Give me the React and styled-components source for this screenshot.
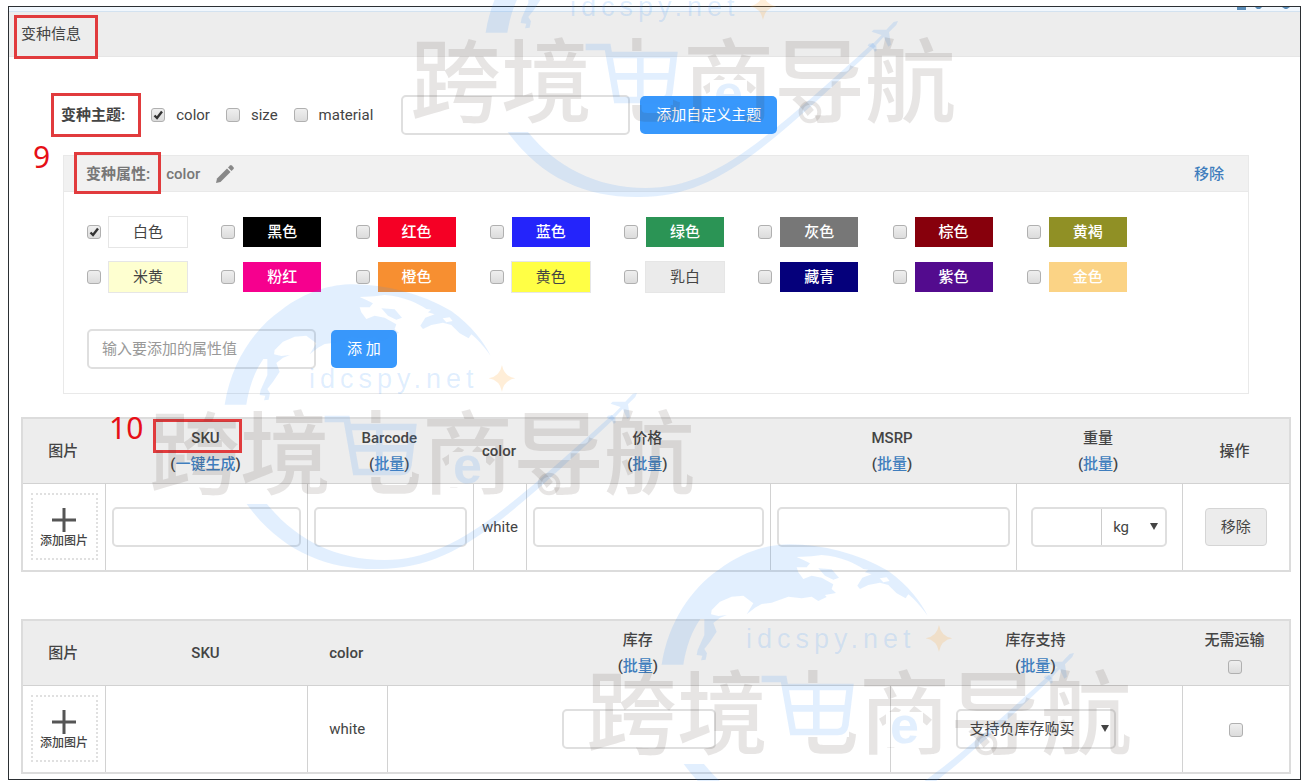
import React from 'react';
import styled, { createGlobalStyle } from 'styled-components';

const GlobalStyle = createGlobalStyle`
    * {
        box-sizing: border-box;
    }
    body {
        margin: 0;
        background: #fff;
        color: #444;
        font-family: Roboto, "Noto Sans CJK SC", sans-serif;
        font-size: 15px;
        line-height: 26px;
    }
    input, select, button {
        font: inherit;
        color: inherit;
    }
`;

const Page = styled.div`
    position: relative;
    padding: 6px 4px 3px 8px;
`;

const Frame = styled.main`
    border: 1px solid #2b2f33;
    padding-bottom: 5px;
`;

const TopStrip = styled.div`
    display: flex;
    justify-content: flex-end;
    height: 5px;
    padding-right: 8px;
    background: #f1f7fd;
    border-bottom: 1px solid #d3e2f0;
`;

const SectionHeader = styled.header`
    display: flex;
    height: 45px;
    padding: 9px 12px;
    background: #ededed;
    border-bottom: 1px solid #e6e6e6;
`;

const SectionTitle = styled.h1`
    position: relative;
    margin: 0;
    font-size: 15px;
    font-weight: 400;
    line-height: 26px;
`;

const Highlight = styled.span`
    position: absolute;
    inset: ${props => props.$inset};
    border: 3px solid #e13b3d;
    pointer-events: none;
`;

const StepNumber = styled.span`
    position: absolute;
    left: ${props => props.$left};
    top: ${props => props.$top};
    color: #e60f17;
    font-family: "Noto Sans", sans-serif;
    font-size: 30px;
    font-weight: 400;
    line-height: 30px;
`;

const ThemeRow = styled.div`
    display: flex;
    align-items: center;
    gap: 10px;
    padding: 38px 52px 0;
`;

const ThemeChoices = styled.div`
    display: flex;
    gap: 16px;
    margin: 0 18px 0 16px;
`;

const FieldLabel = styled.span`
    position: relative;
    font-weight: 700;
`;

const CheckLabel = styled.label`
    display: flex;
    align-items: center;
    gap: 11px;
`;

const CheckBox = styled.span`
    position: relative;
    display: inline-flex;
    width: 14px;
    height: 14px;
    vertical-align: middle;

    input {
        appearance: none;
        width: 14px;
        height: 14px;
        margin: 0;
        border: 1px solid #b0b0b0;
        border-radius: 3px;
        background: linear-gradient(#efefef, #dcdcdc);
    }
    svg {
        position: absolute;
        inset: 1px;
        display: none;
        pointer-events: none;
    }
    input:checked + svg {
        display: block;
    }
`;

const TextInput = styled.input`
    width: ${props => props.$width || '100%'};
    height: 40px;
    padding: 0 13px;
    border: 2px solid #dfdfdf;
    border-radius: 5px;
    background: #fff;

    &::placeholder {
        color: #999;
        opacity: 1;
    }
`;

const PrimaryButton = styled.button`
    height: 38px;
    padding: 0 16px;
    border: 0;
    border-radius: 5px;
    background: #3898fc;
    color: #fff;
`;

const PlainButton = styled.button`
    height: 38px;
    padding: 0 15px;
    border: 1px solid #d5d5d5;
    border-radius: 4px;
    background: #ececec;
`;

const Panel = styled.section`
    position: relative;
    margin: 20px 51px 23px 54px;
    border: 1px solid #e9e9e9;
`;

const PanelHeader = styled.div`
    display: flex;
    align-items: center;
    gap: 16px;
    height: 36px;
    padding: 0 24px 0 22px;
    background: #f1f1f1;
    border-bottom: 1px solid #e9e9e9;
    color: #777;
    font-weight: 500;
`;

const Link = styled.a`
    color: #3f7dbd;
    font-weight: 500;
    text-decoration: none;
`;

const EditButton = styled.button`
    display: flex;
    margin-right: auto;
    padding: 0;
    border: 0;
    background: none;
`;

const Swatches = styled.div`
    display: grid;
    grid-template-columns: repeat(8, 1fr);
    row-gap: 13px;
    padding: 24px 87px 0 23px;
`;

const SwatchLabel = styled.label`
    display: flex;
    align-items: center;
    gap: 7px;
`;

const Swatch = styled.span`
    width: 80px;
    height: 32px;
    border: 1px solid ${props => (props.$border ? '#e6e6e6' : '#fff')};
    background: ${props => props.$bg};
    color: ${props => props.$color || '#fff'};
    font-weight: ${props => (props.$color ? 400 : 500)};
    line-height: 30px;
    text-align: center;
`;

const AddRow = styled.div`
    display: flex;
    align-items: center;
    gap: 15px;
    padding: 36px 23px 24px;
`;

const TableArea = styled.div`
    position: relative;
    margin: 0 9px ${props => props.$bottom || '0'} 12px;
`;

const Table = styled.table`
    width: 100%;
    table-layout: fixed;
    border-collapse: collapse;
    border: 2px solid #dcdcdc;
`;

const Col = styled.col`
    width: ${props => props.$width};
`;

const Th = styled.th`
    height: 65px;
    padding: 0 2px 0 0;
    background: #ededed;
    border-bottom: 1px solid #d2d2d2;
    font-weight: 500;
    line-height: 26px;
`;

const HeadText = styled.span`
    position: relative;
    display: inline-block;
`;

const Td = styled.td`
    height: 88px;
    padding: 0 6px;
    border-left: 1px solid #d2d2d2;
    text-align: center;
`;

const AddPicture = styled.button`
    display: inline-flex;
    flex-direction: column;
    align-items: center;
    width: 67px;
    height: 67px;
    padding: 13px 0 0;
    border: 2px dotted #e0e0e0;
    background: #fff;
    font-size: 12px;
    font-weight: 500;
    line-height: 18px;
`;

const WeightGroup = styled.div`
    display: inline-flex;
    width: 136px;
    height: 40px;
    vertical-align: middle;
    border: 2px solid #dfdfdf;
    border-radius: 5px;
`;

const WeightInput = styled.input`
    width: 69px;
    padding: 0 8px;
    border: 0;
    border-right: 1px solid #ccc;
    background: none;
`;

const SelectWrap = styled.span`
    position: relative;
    display: inline-block;
    width: ${props => props.$width || 'auto'};
    flex: 1;

    select {
        appearance: none;
        width: 100%;
        height: ${props => (props.$boxed ? '40px' : '36px')};
        padding: 0 11px;
        border: ${props => (props.$boxed ? '2px solid #dfdfdf' : '0')};
        border-radius: 5px;
        background: none;
    }
    svg {
        position: absolute;
        right: 7px;
        top: calc(50% - 5px);
        pointer-events: none;
    }
`;

const WatermarkLayer = styled.svg`
    position: absolute;
    inset: 0;
    width: 100%;
    height: 100%;
    pointer-events: none;
`;

const MarkTitle = styled.text`
    font-family: "Noto Sans CJK SC", sans-serif;
    font-size: 91px;
    font-weight: 500;
    fill: rgba(70, 55, 45, 0.13);
`;

const MarkDomain = styled.text`
    font-family: "Liberation Sans", sans-serif;
    font-size: 27px;
    letter-spacing: 5px;
    fill: rgba(60, 150, 250, 0.16);
`;

const MarkLetter = styled.text`
    font-family: "Liberation Sans", sans-serif;
    font-size: 52px;
    font-weight: 700;
    fill: rgba(60, 150, 250, 0.15);
`;

const blue = 'rgba(60, 150, 250, 0.15)';

const colors = [
    { name: '白色', bg: '#fff', color: '#444', border: true },
    { name: '黑色', bg: '#000' },
    { name: '红色', bg: '#f50025' },
    { name: '蓝色', bg: '#2424fb' },
    { name: '绿色', bg: '#2b9455' },
    { name: '灰色', bg: '#777' },
    { name: '棕色', bg: '#87000c' },
    { name: '黄褐', bg: '#909025' },
    { name: '米黄', bg: '#feffd0', color: '#444', border: true },
    { name: '粉红', bg: '#f6008e' },
    { name: '橙色', bg: '#f78f31' },
    { name: '黄色', bg: '#ffff45', color: '#444', border: true },
    { name: '乳白', bg: '#ebebeb', color: '#444', border: true },
    { name: '藏青', bg: '#05007b' },
    { name: '紫色', bg: '#530b8e' },
    { name: '金色', bg: '#fbd385' }
];

const Check = ({ checked, label }) => (
    <CheckBox>
        <input type="checkbox" defaultChecked={checked} aria-label={label} />
        <svg width="12" height="12" viewBox="0 0 12 12">
            <path
                d="M2.5 6.5L5 9L10 2.5"
                fill="none"
                stroke="#333"
                strokeWidth="2.4"
            />
        </svg>
    </CheckBox>
);

const Arrow = () => (
    <svg width="8" height="8" viewBox="0 0 8 8">
        <path d="M0 1H8L4 8Z" fill="#444" />
    </svg>
);

const BatchHead = ({ title, link = '批量', inset }) => (
    <Th scope="col">
        <HeadText>
            {title}
            {inset && <Highlight $inset={inset} />}
        </HeadText>
        <br />(<Link href="#batch">{link}</Link>)
    </Th>
);

const PictureButton = () => (
    <AddPicture type="button">
        <svg width="24" height="24" viewBox="0 0 24 24">
            <path d="M12 0V24M0 12H24" stroke="#555" strokeWidth="3" />
        </svg>
        添加图片
    </AddPicture>
);

const Logo = ({ x, y }) => (
    <g transform={`translate(${x} ${y})`}>
        <g transform="scale(0.3333)">
            <path
                fill={blue}
                fillRule="evenodd"
                d="M20 389C40 260 110 160 190 105C265 48 340 28 405 28C500 28 610 55 700 108C760 150 800 205 818 242C790 205 775 190 760 178L752 190L725 175L700 150L675 143L640 150L615 162L607 152L622 128L650 118L630 112L640 104L625 102C600 85 560 65 500 60L470 64L425 66L445 75L465 85L455 97L425 97L430 112L445 132L470 122L500 128L535 148L530 162L543 174L510 180L515 186L490 198L470 185L440 190L400 185L350 203L320 207L300 218L275 238L295 205L265 182L230 185L195 200L170 225L168 238L190 243L216 240L195 248L175 264L185 290L165 320L148 342L156 355L152 374L138 376L142 362L125 360L128 345L148 300L148 252L136 252C110 290 95 330 85 389ZM490 100L530 103L552 128L535 134L510 122ZM674 130L695 127L704 138L685 142Z"
            />
            <path
                fill={blue}
                d="M86 687C190 830 330 885 483 882C700 880 840 760 1190 430L1182 420C850 720 700 855 500 855C350 855 230 790 147 687Z"
            />
            <path
                fill={blue}
                d="M1257 354L1252 366L1230 388L1236 425L1228 431L1214 402L1192 426L1193 443L1187 446L1180 434L1166 428L1170 422L1184 420L1208 396L1178 386L1184 380L1222 380L1244 357Z"
            />
            <path
                fill="none"
                stroke={blue}
                strokeWidth="20"
                d="M320 432H386L414 591H548Q568 591 571 571L585 456H390M404 520H578M484 456V591"
            />
            <circle
                cx="993"
                cy="627"
                r="28"
                fill="none"
                stroke="rgba(70, 55, 45, 0.13)"
                strokeWidth="12"
            />
            <path
                fill="rgba(255, 170, 60, 0.2)"
                d="M852 270Q858 304 892 310Q858 316 852 350Q846 316 812 310Q846 304 852 270Z"
            />
        </g>
        <MarkDomain x="91" y="113">
            idcspy.net
        </MarkDomain>
        <MarkTitle x="-69" y="212" mask="url(#cart-gap)">
            跨境电商导航
        </MarkTitle>
        <MarkLetter x="235" y="208">
            e
        </MarkLetter>
    </g>
);

const Watermark = () => (
    <WatermarkLayer aria-hidden="true">
        <mask
            id="cart-gap"
            maskUnits="userSpaceOnUse"
            x="-100"
            y="80"
            width="620"
            height="180"
        >
            <rect x="-100" y="80" width="620" height="180" fill="#fff" />
            <rect x="112" y="148" width="82" height="54" fill="#000" />
            <rect x="112" y="190" width="38" height="18" fill="#000" />
            <rect x="231" y="177" width="37" height="35" fill="#000" />
        </mask>
        <Logo x={479} y={-97} />
        <Logo x={218} y={275} />
        <Logo x={655} y={535} />
    </WatermarkLayer>
);

const VariantAttributes = () => (
    <Panel>
        <StepNumber $left="-31px" $top="-14px">
            9
        </StepNumber>
        <PanelHeader>
            <FieldLabel>
                变种属性:
                <Highlight $inset="-9px -11px -7px -12px" />
            </FieldLabel>
            color
            <EditButton type="button" aria-label="color">
                <svg width="18" height="18" viewBox="0 0 18 18" fill="#888">
                    <path d="M0 18L1 13.5L11 3.5L14.5 7L4.5 17Z" />
                    <path d="M12 2.5L14 0.5Q15 -0.3 15.8 0.5L17.5 2.2Q18.3 3 17.5 4L15.5 6Z" />
                </svg>
            </EditButton>
            <Link href="#remove">移除</Link>
        </PanelHeader>
        <Swatches>
            {colors.map((item, index) => (
                <SwatchLabel key={item.name}>
                    <Check checked={index === 0} />
                    <Swatch
                        $bg={item.bg}
                        $color={item.color}
                        $border={item.border}
                    >
                        {item.name}
                    </Swatch>
                </SwatchLabel>
            ))}
        </Swatches>
        <AddRow>
            <TextInput
                $width="229px"
                placeholder="输入要添加的属性值"
                aria-label="输入要添加的属性值"
            />
            <PrimaryButton type="button">添 加</PrimaryButton>
        </AddRow>
    </Panel>
);

const PriceTable = () => (
    <TableArea $bottom="47px">
        <StepNumber $left="88px" $top="-4px">
            10
        </StepNumber>
        <Table>
            <colgroup>
                <Col $width="6.6%" />
                <Col $width="15.9%" />
                <Col $width="13.1%" />
                <Col $width="4.2%" />
                <Col $width="19.2%" />
                <Col $width="19.4%" />
                <Col $width="13.1%" />
                <Col $width="8.5%" />
            </colgroup>
            <thead>
                <tr>
                    <Th scope="col">图片</Th>
                    <BatchHead
                        title="SKU"
                        link="一键生成"
                        inset="-6px -22px -2px -38px"
                    />
                    <BatchHead title="Barcode" />
                    <Th scope="col">color</Th>
                    <BatchHead title="价格" />
                    <BatchHead title="MSRP" />
                    <BatchHead title="重量" />
                    <Th scope="col">操作</Th>
                </tr>
            </thead>
            <tbody>
                <tr>
                    <Td>
                        <PictureButton />
                    </Td>
                    <Td>
                        <TextInput aria-label="SKU" />
                    </Td>
                    <Td>
                        <TextInput aria-label="Barcode" />
                    </Td>
                    <Td>white</Td>
                    <Td>
                        <TextInput aria-label="价格" />
                    </Td>
                    <Td>
                        <TextInput aria-label="MSRP" />
                    </Td>
                    <Td>
                        <WeightGroup>
                            <WeightInput aria-label="重量" />
                            <SelectWrap>
                                <select aria-label="重量">
                                    <option>kg</option>
                                </select>
                                <Arrow />
                            </SelectWrap>
                        </WeightGroup>
                    </Td>
                    <Td>
                        <PlainButton type="button">移除</PlainButton>
                    </Td>
                </tr>
            </tbody>
        </Table>
    </TableArea>
);

const StockTable = () => (
    <TableArea>
        <Table>
            <colgroup>
                <Col $width="6.6%" />
                <Col $width="15.9%" />
                <Col $width="6.3%" />
                <Col $width="39.7%" />
                <Col $width="23%" />
                <Col $width="8.5%" />
            </colgroup>
            <thead>
                <tr>
                    <Th scope="col">图片</Th>
                    <Th scope="col">SKU</Th>
                    <Th scope="col">color</Th>
                    <BatchHead title="库存" />
                    <BatchHead title="库存支持" />
                    <Th scope="col">
                        无需运输
                        <br />
                        <Check label="无需运输" />
                    </Th>
                </tr>
            </thead>
            <tbody>
                <tr>
                    <Td>
                        <PictureButton />
                    </Td>
                    <Td />
                    <Td>white</Td>
                    <Td>
                        <TextInput $width="154px" aria-label="库存" />
                    </Td>
                    <Td>
                        <SelectWrap $width="160px" $boxed>
                            <select aria-label="库存支持">
                                <option>支持负库存购买</option>
                            </select>
                            <Arrow />
                        </SelectWrap>
                    </Td>
                    <Td>
                        <Check label="无需运输" />
                    </Td>
                </tr>
            </tbody>
        </Table>
    </TableArea>
);

const App = () => (
    <>
        <GlobalStyle />
        <Page>
            <Frame>
                <TopStrip>
                    <svg width="56" height="4" viewBox="0 0 56 4" fill="#5b8db8">
                        <path d="M1 0H10V3H1ZM19 0H26L24 2H21ZM46 0H54L51 2H49Z" />
                    </svg>
                </TopStrip>
                <SectionHeader>
                    <SectionTitle>
                        变种信息
                        <Highlight $inset="-6px -17px -12px -7px" />
                    </SectionTitle>
                </SectionHeader>
                <ThemeRow>
                    <FieldLabel>
                        变种主题:
                        <Highlight $inset="-9px -16px -9px -10px" />
                    </FieldLabel>
                    <ThemeChoices>
                        <CheckLabel>
                            <Check checked />
                            color
                        </CheckLabel>
                        <CheckLabel>
                            <Check />
                            size
                        </CheckLabel>
                        <CheckLabel>
                            <Check />
                            material
                        </CheckLabel>
                    </ThemeChoices>
                    <TextInput $width="229px" aria-label="添加自定义主题" />
                    <PrimaryButton type="button">添加自定义主题</PrimaryButton>
                </ThemeRow>
                <VariantAttributes />
                <PriceTable />
                <StockTable />
            </Frame>
            <Watermark />
        </Page>
    </>
);

export default App;
